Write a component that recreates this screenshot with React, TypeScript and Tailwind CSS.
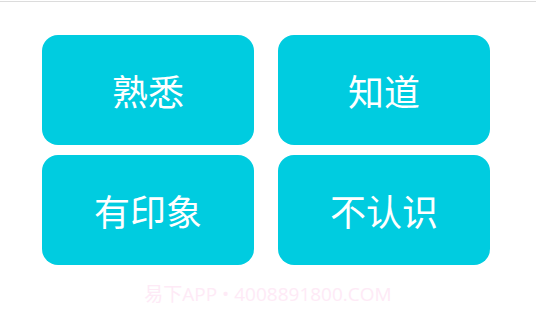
const options = ['熟悉', '知道', '有印象', '不认识'];

export default function App() {
  return (
    <div
      className="w-[536px] h-[316px] bg-white overflow-hidden"
      style={{ fontFamily: '"Noto Sans CJK SC", "Noto Sans", sans-serif' }}
    >
      <div className="h-px mt-px bg-[#dcdcdc]" />
      <div className="grid grid-cols-[212px_212px] gap-x-6 gap-y-[10px] pl-[42px] pt-[33px]">
        {options.map((label) => (
          <button
            key={label}
            className="h-[110px] rounded-2xl bg-[#00cce0] text-white text-[36px] font-normal flex items-center justify-center"
          >
            {label}
          </button>
        ))}
      </div>
      <div
        className="mt-[17px] text-center text-[19px] leading-[24px] text-[#feeaf6]"
        style={{ fontFamily: '"Open Sans", "Noto Sans CJK SC", sans-serif' }}
      >
        易下APP • 4008891800.COM
      </div>
    </div>
  );
}
